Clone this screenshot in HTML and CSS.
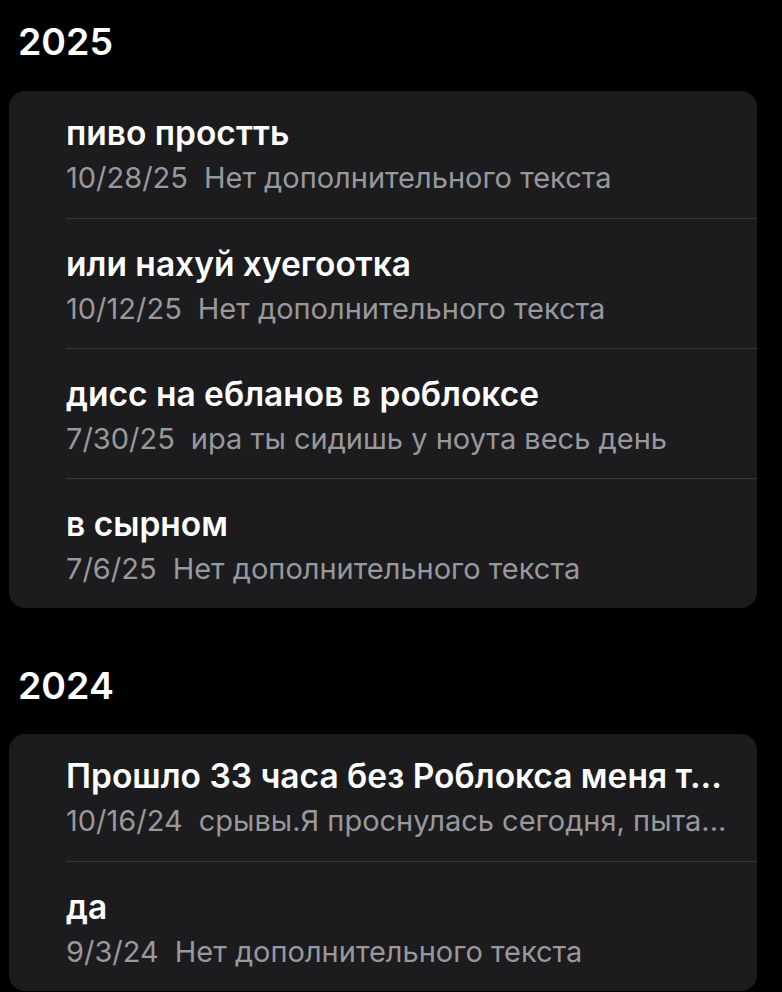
FILE: index.html
```html
<!DOCTYPE html>
<html lang="ru">
<head>
<meta charset="utf-8">
<link rel="stylesheet" href="styles.css">
</head>
<body>
<section class="group">
  <h2 class="year">2025</h2>
  <div class="card">
    <div class="row first">
      <div class="title">пиво простть</div>
      <div class="sub"><span class="date">10/28/25</span>Нет дополнительного текста</div>
    </div>
    <div class="row">
      <div class="title">или нахуй хуегоотка</div>
      <div class="sub"><span class="date">10/12/25</span>Нет дополнительного текста</div>
    </div>
    <div class="row">
      <div class="title">дисс на ебланов в роблоксе</div>
      <div class="sub"><span class="date">7/30/25</span>ира ты сидишь у ноута весь день</div>
    </div>
    <div class="row">
      <div class="title">в сырном</div>
      <div class="sub"><span class="date">7/6/25</span>Нет дополнительного текста</div>
    </div>
  </div>
</section>
<section class="group">
  <h2 class="year">2024</h2>
  <div class="card">
    <div class="row first">
      <div class="title">Прошло 33 часа без Роблокса меня т...</div>
      <div class="sub"><span class="date">10/16/24</span>срывы.Я проснулась сегодня, пыта...</div>
    </div>
    <div class="row">
      <div class="title">да</div>
      <div class="sub"><span class="date">9/3/24</span>Нет дополнительного текста</div>
    </div>
  </div>
</section>
</body>
</html>
```

FILE: styles.css
```css
* { box-sizing: border-box; }
html, body {
  margin: 0;
  background: #000;
}
body {
  padding: 0 25px 0 9px;
  font-family: Inter, "Noto Sans", sans-serif;
  color: #fff;
}
.group {
  display: flex;
  flex-direction: column;
}
.year {
  margin: 0;
  padding: 18px 0 0 9px;
  height: 91px;
  font-size: 37.5px;
  line-height: 48px;
  font-weight: 600;
}
.group + .group .year {
  margin-top: 35px;
  padding-top: 19px;
}
.card {
  background: #1c1c1e;
  border-radius: 16px;
  padding-left: 57px;
}
.row {
  height: 130px;
  padding-top: 25px;
  border-top: 1px solid #38383a;
  padding-right: 6px;
}
.row.first {
  border-top: none;
  height: 127px;
  padding-top: 22px;
}
.title {
  font-size: 33.5px;
  line-height: 40px;
  font-weight: 600;
  white-space: nowrap;
}
.sub {
  margin-top: 7px;
  font-size: 29px;
  line-height: 36px;
  color: #98989d;
  white-space: nowrap;
}
.date {
  margin-right: 16px;
}
```
